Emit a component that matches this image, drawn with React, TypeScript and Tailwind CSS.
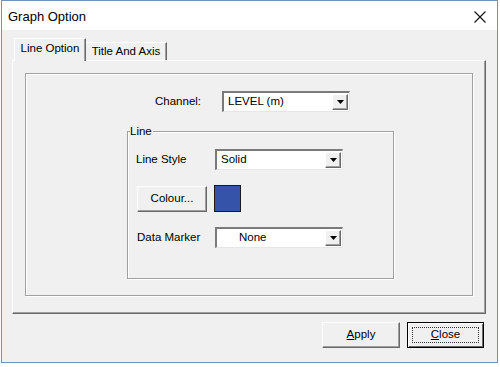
import React from 'react';

const font = "font-['Liberation_Sans',Arial,sans-serif]";

const Arrow = () => (
  <div className="w-[16px] h-full bg-[#f0f0f0] border-t border-l border-white border-r border-b border-r-[#696969] border-b-[#696969] shadow-[inset_-1px_-1px_0_#a0a0a0] flex items-center justify-center">
    <svg width="7" height="4" viewBox="0 0 7 4">
      <path d="M0 0H7L3.5 4Z" fill="#000" />
    </svg>
  </div>
);

const Combo = ({ value, center }: { value: string; center?: boolean }) => (
  <div className="w-[128px] h-[21px] bg-white border-t-2 border-l-2 border-t-[#7a7a7a] border-l-[#7a7a7a] border-r border-b border-r-[#e6e6e6] border-b-[#e6e6e6] flex items-stretch">
    <div className={`flex-1 flex items-center text-[11.5px] text-black ${center ? 'pl-[22px]' : 'pl-[4px]'}`}>{value}</div>
    <div className="py-[1px] pr-[1px]">
      <Arrow />
    </div>
  </div>
);

const Button = ({ children, def, className = '' }: { children: React.ReactNode; def?: boolean; className?: string }) => (
  <div
    className={`h-[26px] bg-[#f0f0f0] flex items-center justify-center text-[11.5px] text-black ${
      def
        ? 'border border-black shadow-[inset_1px_1px_0_#fff,inset_-1px_-1px_0_#696969]'
        : 'border-t border-l border-white border-r border-b border-r-[#696969] border-b-[#696969] shadow-[inset_-1px_-1px_0_#a0a0a0]'
    } ${className}`}
  >
    {def ? (
      <div className="border border-dotted border-[#333] w-[calc(100%-8px)] h-[calc(100%-8px)] flex items-center justify-center">
        {children}
      </div>
    ) : (
      children
    )}
  </div>
);

export default function App() {
  return (
    <div className={`w-[500px] h-[367px] bg-white ${font}`}>
      <div className="ml-[1px] w-[497px] h-[363px] border border-[#6f93c0] bg-[#f0f0f0] flex flex-col">
        {/* title bar */}
        <div className="h-[29px] bg-white flex items-center justify-between pl-[6px] pr-[11px]">
          <span className="text-[13px] text-black mt-[3px]">Graph Option</span>
          <svg width="12" height="12" viewBox="0 0 12 12" className="mt-[2px]">
            <path d="M0.5 0.5L11.5 11.5M11.5 0.5L0.5 11.5" stroke="#111" strokeWidth="1.1" />
          </svg>
        </div>

        <div className="flex-1 pl-[10px] pr-[9px] pt-[8px]">
          {/* tabs */}
          <div className="flex items-end h-[22px] pl-[2px] relative z-10">
            <div className="h-[23px] -mb-[1px] w-[72px] bg-[#f0f0f0] border-t border-l border-white border-r border-r-[#696969] shadow-[inset_-1px_0_0_#a0a0a0] flex items-center justify-center text-[11.5px] text-black pb-[2px]">
              Line Option
            </div>
            <div className="h-[18px] w-[81px] bg-[#f0f0f0] border-t border-white border-r border-r-[#696969] shadow-[inset_-1px_0_0_#a0a0a0] flex items-center justify-center text-[11.5px] text-black">
              Title And Axis
            </div>
          </div>

          {/* panel */}
          <div className="w-[474px] h-[254px] border-t border-l border-white border-r border-b border-r-[#696969] border-b-[#696969] shadow-[inset_-1px_-1px_0_#a0a0a0] pl-[12px] pt-[12px]">
            <div className="w-[448px] h-[223px] border border-[#a0a0a0] shadow-[inset_1px_1px_0_#fff,1px_1px_0_#fff] flex flex-col">
              {/* channel */}
              <div className="flex items-center mt-[17px] pl-[129px]">
                <span className="w-[67px] text-[11.5px] text-black">Channel:</span>
                <Combo value="LEVEL (m)" />
              </div>

              {/* group */}
              <div className="relative ml-[101px] mt-[19px] w-[267px] h-[148px] border border-[#a0a0a0] shadow-[inset_1px_1px_0_#fff,1px_1px_0_#fff] pl-[8px]">
                <span className="absolute -top-[8px] left-[2px] bg-[#f0f0f0] text-[11.5px] text-black leading-[14px] pr-[1px]">
                  Line
                </span>
                <div className="flex items-center mt-[17px]">
                  <span className="w-[79px] text-[11.5px] text-black">Line Style</span>
                  <Combo value="Solid" />
                </div>
                <div className="flex items-center mt-[15px]">
                  <Button className="w-[70px] h-[25px] ml-[1px]">Colour...</Button>
                  <div className="ml-[7px] w-[27px] h-[27px] bg-[#3553a8] border border-[#1a1a1a]" />
                </div>
                <div className="flex items-center mt-[15px]">
                  <span className="w-[78px] ml-[1px] text-[11.5px] text-black">Data Marker</span>
                  <Combo value="None" center />
                </div>
              </div>
            </div>
          </div>

          {/* buttons */}
          <div className="flex justify-end gap-[7px] mt-[8px] pr-[4px]">
            <Button className="w-[78px]">
              <span>
                <span className="underline">A</span>pply
              </span>
            </Button>
            <Button def className="w-[77px]">
              <span>
                <span className="underline">C</span>lose
              </span>
            </Button>
          </div>
        </div>
      </div>
    </div>
  );
}
